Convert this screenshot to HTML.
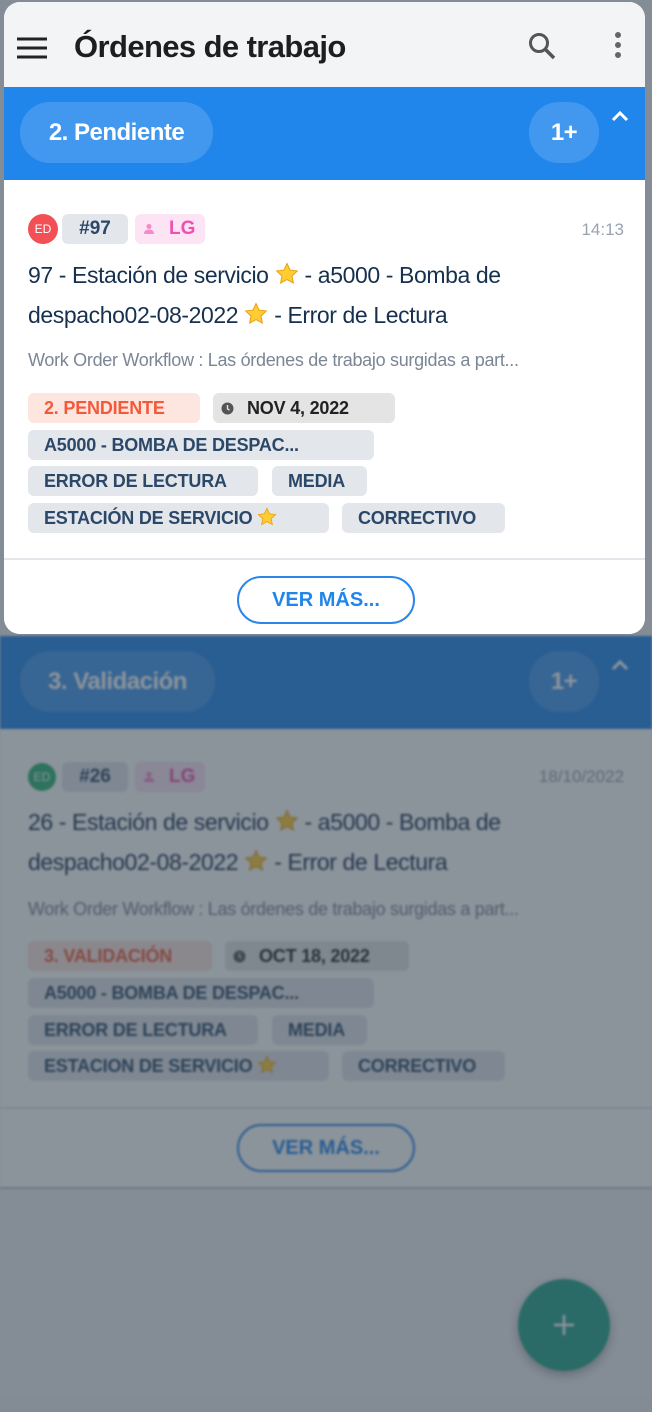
<!DOCTYPE html>
<html><head><meta charset="utf-8"><style>
*{margin:0;padding:0;box-sizing:border-box}
body{width:652px;height:1412px;position:relative;overflow:hidden;background:#eef0f2;font-family:"Liberation Sans",sans-serif}
.abs{position:absolute}
.band{position:absolute;left:0;width:652px;height:93px;background:#2186eb}
.pill{position:absolute;top:15px;height:61px;border-radius:30px;background:rgba(255,255,255,.15);color:#fff;font-weight:bold;font-size:24px;line-height:61px;text-align:center;letter-spacing:-.5px}
.chev{position:absolute;left:610px;top:20px;width:20px;height:20px}
.card{position:absolute;left:0;width:652px;background:#fff}
.chip{position:absolute;height:30px;border-radius:6px;background:#e3e6ea;color:#2c4868;font-weight:bold;font-size:18px;line-height:31px;padding:0 16px;white-space:nowrap;letter-spacing:-.2px}
.title{position:absolute;left:28px;font-size:23px;color:#16304f;white-space:nowrap;letter-spacing:-.4px}
.desc{position:absolute;left:28px;font-size:18px;color:#7a8696;white-space:nowrap;letter-spacing:-.3px}
.btn{position:absolute;left:237px;width:178px;height:48px;border:2px solid #2b86ea;border-radius:24px;color:#2186eb;font-weight:bold;font-size:20px;line-height:44px;text-align:center;background:#fff}
.star{display:inline-block;width:24px;height:24px;vertical-align:-3px}
</style></head><body>
<svg width="0" height="0" style="position:absolute"><defs><symbol id="st" viewBox="0 0 24 24"><path d="M12 1.5l3.1 6.6 7.2.9-5.3 5 1.4 7.1L12 17.6l-6.4 3.5 1.4-7.1-5.3-5 7.2-.9z" fill="#ffcc33" stroke="#e8a010" stroke-width="1"/></symbol></defs></svg>

<div class="abs" style="left:0;top:0;width:652px;height:1412px;filter:blur(1px)">
<div class="band" style="top:636px">
  <div class="pill" style="left:20px;width:195px">3. Validación</div>
  <div class="pill" style="left:529px;width:70px">1+</div>
  <svg class="chev" viewBox="0 0 20 20"><path d="M3 13l7-7 7 7" stroke="#fff" stroke-width="3" fill="none"/></svg>
</div>
<div class="card" style="top:729px;height:460px;border-bottom:2px solid #c0c6cc">
  <div class="abs" style="left:28px;top:34px;width:28px;height:28px;border-radius:50%;background:#2bb673;color:#fff;font-size:12px;line-height:28px;text-align:center">ED</div>
  <div class="abs" style="left:62px;top:33px;width:66px;height:30px;border-radius:6px;background:#e3e6ea;color:#2c4868;font-weight:bold;font-size:19px;line-height:30px;text-align:center">#26</div>
  <div class="abs" style="left:135px;top:33px;width:70px;height:30px;border-radius:6px;background:#fde4f4;color:#f050b0;font-weight:bold;font-size:19px;line-height:30px;padding-left:34px">LG
    <svg class="abs" style="left:8px;top:9px" width="12" height="12"><circle cx="6" cy="3.5" r="2.5" fill="#f48ac8"/><path d="M1 11c0-3 2-4.5 5-4.5s5 1.5 5 4.5z" fill="#f48ac8"/></svg></div>
  <div class="abs" style="right:28px;top:38px;font-size:17px;color:#9aa3b0">18/10/2022</div>
  <div class="title" style="top:80px">26 - Estación de servicio <svg class="star"><use href="#st"/></svg> - a5000 - Bomba de</div>
  <div class="title" style="top:120px">despacho02-08-2022 <svg class="star"><use href="#st"/></svg> - Error de Lectura</div>
  <div class="desc" style="top:170px">Work Order Workflow : Las órdenes de trabajo surgidas a part...</div>
  <div class="chip" style="left:28px;top:212px;width:184px;background:#fde6e0;color:#f45a3a">3. VALIDACIÓN</div>
  <div class="chip" style="left:225px;top:212px;width:184px;color:#222;background:#e4e4e4;padding-left:34px">OCT 18, 2022
    <svg class="abs" style="left:8px;top:9px" width="13" height="13"><circle cx="6.5" cy="6.5" r="6" fill="#555"/><path d="M6.5 3v4l2 1" stroke="#e4e4e4" stroke-width="1.4" fill="none"/></svg></div>
  <div class="chip" style="left:28px;top:249px;width:346px">A5000 - BOMBA DE DESPAC...</div>
  <div class="chip" style="left:28px;top:286px;width:230px">ERROR DE LECTURA</div>
  <div class="chip" style="left:272px;top:286px;width:95px">MEDIA</div>
  <div class="chip" style="left:28px;top:322px;width:301px">ESTACION DE SERVICIO <svg class="star" style="width:20px;height:20px"><use href="#st"/></svg></div>
  <div class="chip" style="left:342px;top:322px;width:163px">CORRECTIVO</div>
  <div class="abs" style="left:0;top:378px;width:652px;height:2px;background:#e3e6ea"></div>
  <div class="btn" style="top:395px">VER MÁS...</div>
</div>
<div class="abs" style="left:518px;top:1279px;width:92px;height:92px;border-radius:50%;background:#22a58c;box-shadow:0 4px 10px rgba(0,0,0,.3)">
  <svg class="abs" style="left:34px;top:34px" width="24" height="24"><path d="M12 2v20M2 12h20" stroke="#fff" stroke-width="2.5"/></svg>
</div>
</div>

<div class="abs" style="left:0;top:0;width:652px;height:1412px;background:rgba(48,62,76,.56)"></div>

<div class="abs" style="left:4px;top:2px;width:641px;height:632px;border-radius:16px;overflow:hidden;background:#fff">
  <div class="abs" style="left:0;top:0;width:641px;height:85px;background:#f3f4f6">
    <svg class="abs" style="left:12px;top:34px" width="32" height="24"><path d="M1 3h30M1 12h30M1 21h30" stroke="#222" stroke-width="3"/></svg>
    <div class="abs" style="left:70px;top:27px;font-size:31px;font-weight:bold;color:#1e1e1e;letter-spacing:-.6px">Órdenes de trabajo</div>
    <svg class="abs" style="left:522px;top:28px" width="32" height="32"><circle cx="13" cy="13" r="8.5" stroke="#555" stroke-width="3" fill="none"/><path d="M19 19l9 9" stroke="#555" stroke-width="3.5"/></svg>
    <svg class="abs" style="left:608px;top:28px" width="12" height="32"><circle cx="6" cy="5" r="3" fill="#666"/><circle cx="6" cy="15" r="3" fill="#666"/><circle cx="6" cy="25" r="3" fill="#666"/></svg>
  </div>
  <div class="band" style="top:85px;left:-4px">
    <div class="pill" style="left:20px;width:193px">2. Pendiente</div>
    <div class="pill" style="left:529px;width:70px">1+</div>
    <svg class="chev" viewBox="0 0 20 20"><path d="M3 13l7-7 7 7" stroke="#fff" stroke-width="3" fill="none"/></svg>
  </div>
  <div class="card" style="top:178px;left:-4px;height:460px">
    <div class="abs" style="left:28px;top:34px;width:30px;height:30px;border-radius:50%;background:#f25055;color:#fff;font-size:12px;line-height:30px;text-align:center">ED</div>
    <div class="abs" style="left:62px;top:34px;width:66px;height:30px;border-radius:6px;background:#e3e6ea;color:#2c4868;font-weight:bold;font-size:19px;line-height:30px;text-align:center">#97</div>
    <div class="abs" style="left:135px;top:34px;width:70px;height:30px;border-radius:6px;background:#fde4f4;color:#f050b0;font-weight:bold;font-size:19px;line-height:30px;padding-left:34px">LG
      <svg class="abs" style="left:8px;top:9px" width="12" height="12"><circle cx="6" cy="3.5" r="2.5" fill="#f48ac8"/><path d="M1 11c0-3 2-4.5 5-4.5s5 1.5 5 4.5z" fill="#f48ac8"/></svg></div>
    <div class="abs" style="right:28px;top:40px;font-size:17px;color:#9aa3b0">14:13</div>
    <div class="title" style="top:82px">97 - Estación de servicio <svg class="star"><use href="#st"/></svg> - a5000 - Bomba de</div>
    <div class="title" style="top:122px">despacho02-08-2022 <svg class="star"><use href="#st"/></svg> - Error de Lectura</div>
    <div class="desc" style="top:170px">Work Order Workflow : Las órdenes de trabajo surgidas a part...</div>
    <div class="chip" style="left:28px;top:213px;width:172px;background:#fde6e0;color:#f45a3a">2. PENDIENTE</div>
    <div class="chip" style="left:213px;top:213px;width:182px;color:#222;background:#e4e4e4;padding-left:34px">NOV 4, 2022
      <svg class="abs" style="left:8px;top:9px" width="13" height="13"><circle cx="6.5" cy="6.5" r="6" fill="#555"/><path d="M6.5 3v4l2 1" stroke="#e4e4e4" stroke-width="1.4" fill="none"/></svg></div>
    <div class="chip" style="left:28px;top:250px;width:346px">A5000 - BOMBA DE DESPAC...</div>
    <div class="chip" style="left:28px;top:286px;width:230px">ERROR DE LECTURA</div>
    <div class="chip" style="left:272px;top:286px;width:95px">MEDIA</div>
    <div class="chip" style="left:28px;top:323px;width:301px">ESTACIÓN DE SERVICIO <svg class="star" style="width:20px;height:20px"><use href="#st"/></svg></div>
    <div class="chip" style="left:342px;top:323px;width:163px">CORRECTIVO</div>
    <div class="abs" style="left:0;top:378px;width:652px;height:2px;background:#e3e6ea"></div>
    <div class="btn" style="top:396px">VER MÁS...</div>
  </div>
</div>
</body></html>
